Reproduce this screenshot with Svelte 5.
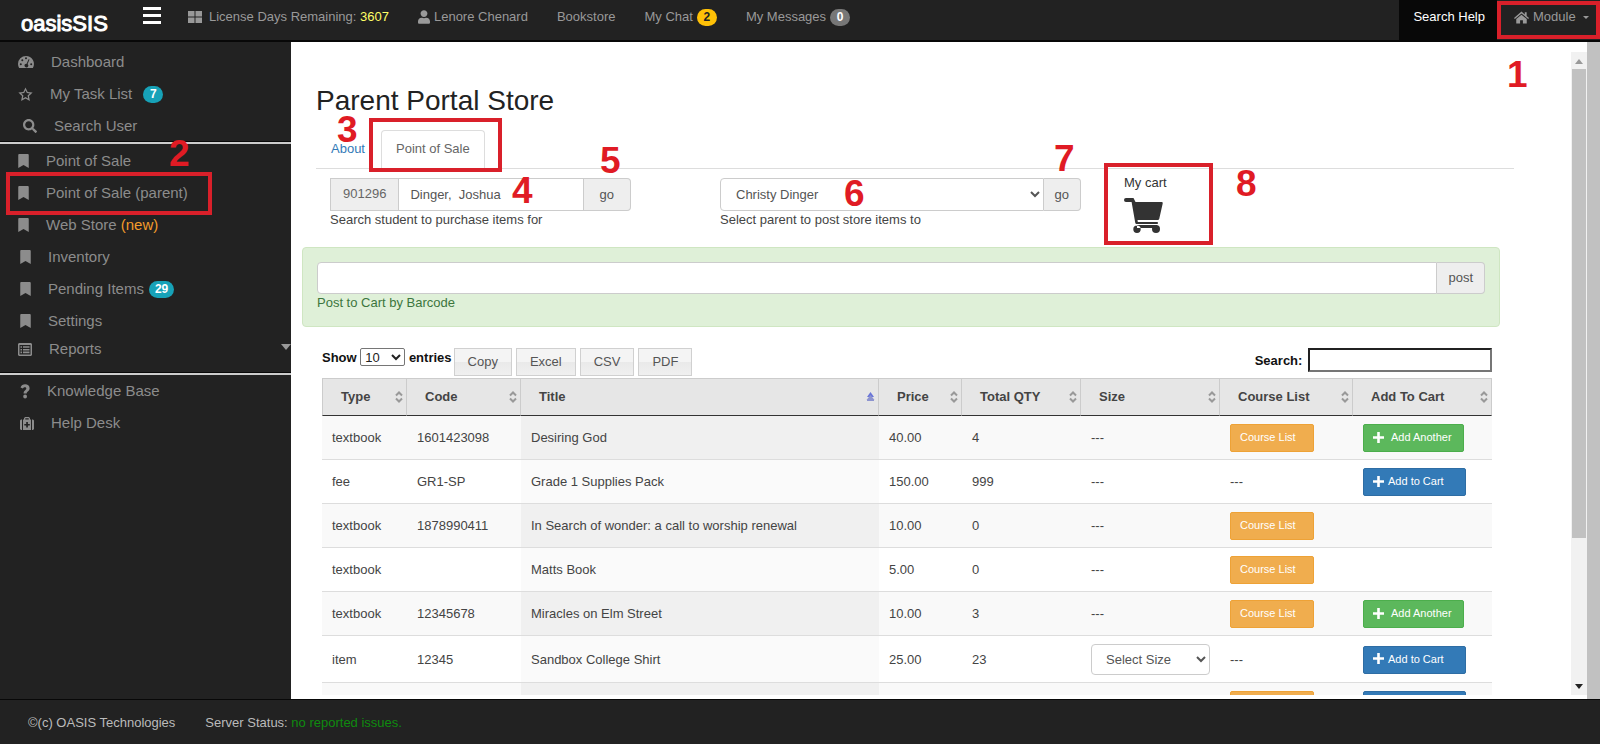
<script lang="ts">
	type Icon = { box: string; w: number; h: number; d: string };

	const icons: Record<string, Icon> = {
		bookmark: {
			box: '0 0 384 512',
			w: 11,
			h: 14,
			d: 'M0 512V40C0 18 18 0 40 0h304c22 0 40 18 40 40v472L192 400z'
		},
		gauge: {
			box: '0 0 16 14',
			w: 16,
			h: 14,
			d: 'M8 1a8 8 0 0 0-8 8c0 1.500.4 2.800 1.100 4h13.800A8 8 0 0 0 8 1zM8 2.200a1 1 0 1 1 0 2 1 1 0 0 1 0-2zM2.800 8.200a1 1 0 1 1 0 2 1 1 0 0 1 0-2zM4.300 4.300a1 1 0 1 1 0 2 1 1 0 0 1 0-2zM13.200 8.200a1 1 0 1 1 0 2 1 1 0 0 1 0-2zM10.600 4.200l.9.400-1.900 4.500a1.900 1.900 0 1 1-1-.4z'
		},
		star: {
			box: '0 0 16 16',
			w: 15,
			h: 15,
			d: 'M8 .4l2.300 4.800 5.300.7-3.900 3.700 1 5.300L8 12.300l-4.700 2.600 1-5.300L.4 5.900l5.300-.7zM8 3.500L6.600 6.400l-3.200.4 2.400 2.300-.6 3.200L8 10.700l2.800 1.600-.6-3.200 2.400-2.300-3.200-.4z'
		},
		search: {
			box: '0 0 512 512',
			w: 14,
			h: 14,
			d: 'M505 442.700L405.300 343c-4.500-4.500-10.600-7-17-7H372c27.600-35.300 44-79.700 44-128C416 93.100 322.900 0 208 0S0 93.100 0 208s93.100 208 208 208c48.300 0 92.700-16.400 128-44v16.300c0 6.400 2.500 12.500 7 17l99.700 99.700c9.400 9.400 24.600 9.400 33.900 0l28.300-28.300c9.400-9.400 9.400-24.600.1-34zM208 336c-70.700 0-128-57.200-128-128 0-70.700 57.200-128 128-128 70.700 0 128 57.200 128 128 0 70.700-57.200 128-128 128z'
		},
		list: {
			box: '0 0 14 13',
			w: 14,
			h: 13,
			d: 'M1 0h12l1 1v11l-1 1H1l-1-1V1zM1.500 2v9.500h11V2zM2.500 3.200H4v1.600H2.500zM5 3.200h6.500v1.600H5zM2.500 5.900H4v1.600H2.500zM5 5.900h6.500v1.600H5zM2.500 8.600H4v1.600H2.500zM5 8.600h6.500v1.600H5z'
		},
		question: {
			box: '0 0 10 15',
			w: 10,
			h: 15,
			d: 'M.5 3.500C1.400 1.300 2.900.3 5.100.3c2.600 0 4.500 1.600 4.500 3.900 0 2.900-2.900 3.300-2.900 5.200H3.600c0-3 2.700-3.300 2.700-4.900 0-.8-.6-1.300-1.400-1.300-.9 0-1.500.5-2 1.400zM5.100 10.600a1.900 1.900 0 1 1 0 3.800 1.900 1.900 0 0 1 0-3.800z'
		},
		medkit: {
			box: '0 0 14 13',
			w: 14,
			h: 13,
			d: 'M4 2.500V1.200L5 0h4l1 1.200v1.300h1V13H3V2.500zM5.300 2.500h3.400V1.300H5.300zM0 3.500l1-1h1V13H1l-1-1zM12 2.500h1l1 1V12l-1 1h-1zM6.200 5v1.900H4.300v1.700h1.900v1.900h1.700V8.600h1.900V6.900H7.900V5z'
		},
		tiles: { box: '0 0 14 12', w: 14, h: 12, d: 'M0 0h6.500v5.500H0zM7.500 0H14v5.500H7.500zM0 6.500h6.500V12H0zM7.500 6.500H14V12H7.500z' },
		user: {
			box: '0 0 448 512',
			w: 12,
			h: 14,
			d: 'M224 256c70.700 0 128-57.300 128-128S294.700 0 224 0 96 57.300 96 128s57.300 128 128 128zm89.600 32h-16.700c-22.200 10.200-46.900 16-72.900 16s-50.600-5.800-72.900-16h-16.700C60.200 288 0 348.200 0 422.400V464c0 26.500 21.500 48 48 48h352c26.500 0 48-21.500 48-48v-41.600c0-74.200-60.200-134.400-134.400-134.400z'
		},
		home: {
			box: '0 0 16 13',
			w: 15,
			h: 13,
			d: 'M8 .2l3.500 3V1h2v3.900L16 7l-.9 1L8 2.100.9 8 0 7zM8 3.500l5.600 4.600V13H9.500V9.500h-3V13H2.400V8.100z'
		},
		plus: { box: '0 0 11 11', w: 11, h: 11, d: 'M4.200 0h2.600v4.200H11v2.600H6.800V11H4.200V6.800H0V4.200h4.200z' },
		cart: {
			box: '0 0 39 35',
			w: 39,
			h: 35,
			d: 'M2 0h7.500l2 4H38q1 0 .7 1.500l-3.500 15.500q-.3 1-1.500 1H13.500l.3 2h20v2H12.500q-1 0-1.200-1L7.600 4H2Q0 4 0 2t2-2zM13 27h20v3H13zM13 27.500a3.500 3.500 0 1 0 0 7.400 3.500 3.500 0 0 0 0-7.400z'
		}
	};

	type Item = { icon: string; label: string; badge?: string; note?: string; step?: number; shift?: string };

	const menu: Item[][] = [
		[
			{ icon: 'gauge', label: 'Dashboard' },
			{ icon: 'star', label: 'My Task List', badge: '7' },
			{ icon: 'search', label: 'Search User', shift: 'far' }
		],
		[
			{ icon: 'bookmark', label: 'Point of Sale' },
			{ icon: 'bookmark', label: 'Point of Sale (parent)', step: 2 },
			{ icon: 'bookmark', label: 'Web Store', note: '(new)' },
			{ icon: 'bookmark', label: 'Inventory', shift: 'near' },
			{ icon: 'bookmark', label: 'Pending Items', badge: '29', shift: 'near' },
			{ icon: 'bookmark', label: 'Settings', shift: 'near' },
			{ icon: 'list', label: 'Reports', shift: 'reports' }
		],
		[
			{ icon: 'question', label: 'Knowledge Base', shift: 'near' },
			{ icon: 'medkit', label: 'Help Desk', shift: 'near' }
		]
	];

	const columns = ['Type', 'Code', 'Title', 'Price', 'Total QTY', 'Size', 'Course List', 'Add To Cart'];

	type Row = { type: string; code: string; title: string; price: string; qty: string; sized?: boolean; course: boolean; add: string };

	const rows: Row[] = [
		{ type: 'textbook', code: '1601423098', title: 'Desiring God', price: '40.00', qty: '4', course: true, add: 'another' },
		{ type: 'fee', code: 'GR1-SP', title: 'Grade 1 Supplies Pack', price: '150.00', qty: '999', course: false, add: 'cart' },
		{ type: 'textbook', code: '1878990411', title: 'In Search of wonder: a call to worship renewal', price: '10.00', qty: '0', course: true, add: '' },
		{ type: 'textbook', code: '', title: 'Matts Book', price: '5.00', qty: '0', course: true, add: '' },
		{ type: 'textbook', code: '12345678', title: 'Miracles on Elm Street', price: '10.00', qty: '3', course: true, add: 'another' },
		{ type: 'item', code: '12345', title: 'Sandbox College Shirt', price: '25.00', qty: '23', sized: true, course: false, add: 'cart' },
		{ type: '', code: '', title: '', price: '', qty: '', course: true, add: 'cart' }
	];

	let student = $state('Dinger,  Joshua');
	let barcode = $state('');
	let query = $state('');
</script>

{#snippet glyph(name: string)}
	{@const icon = icons[name]}
	<svg class="icon" viewBox={icon.box} width={icon.w} height={icon.h} aria-hidden="true">
		<path d={icon.d} fill="currentColor" fill-rule={name === 'cart' ? 'nonzero' : 'evenodd'} />
		{#if name === 'cart'}<circle cx="32" cy="31" r="4" fill="currentColor" />{/if}
	</svg>
{/snippet}

<div class="page">
	<header class="topbar">
		<a class="logo" href="#home">oasisSIS</a>
		<button class="burger" aria-label="Toggle menu"><i></i><i></i><i></i></button>
		<nav class="links">
			<a class="license" href="#license">{@render glyph('tiles')}<span>License Days Remaining: <b>3607</b></span></a>
			<a class="person" href="#profile">{@render glyph('user')}Lenore Chenard</a>
			<a href="#bookstore">Bookstore</a>
			<a href="#chat">My Chat <span class="badge amber">2</span></a>
			<a href="#messages">My Messages <span class="badge grey">0</span></a>
		</nav>
		<a class="help" href="#help">Search Help</a>
		<a class="module" href="#module">
			{@render glyph('home')}Module<i class="caret"></i>
			<span class="step s1">1</span>
		</a>
	</header>

	<div class="middle">
		<aside class="sidebar">
			{#each menu as group}
				<ul>
					{#each group as item}
						<li class={item.shift}>
							<a href="#{item.icon}" class:marked={item.step}>
								{@render glyph(item.icon)}
								<span>
									{item.label}
									{#if item.note}<b class="note">{item.note}</b>{/if}
								</span>
								{#if item.badge}<span class="badge teal">{item.badge}</span>{/if}
								{#if item.step}<span class="step s2">{item.step}</span>{/if}
							</a>
						</li>
					{/each}
				</ul>
			{/each}
		</aside>

		<main>
			<h1>Parent Portal Store</h1>

			<nav class="tabs">
				<a href="#about">About<span class="step s3">3</span></a>
				<a class="active" href="#pos">Point of Sale</a>
			</nav>

			<div class="pickers">
				<div class="picker">
					<div class="group">
						<span class="addon">901296</span>
						<input id="student" type="text" bind:value={student} />
						<button class="wide">go</button>
					</div>
					<label for="student">Search student to purchase items for</label>
					<span class="step s4">4</span>
					<span class="step s5">5</span>
				</div>
				<div class="picker parent">
					<div class="group">
						<select id="parent">
							<option>Christy Dinger</option>
						</select>
						<button>go</button>
					</div>
					<label for="parent">Select parent to post store items to</label>
					<span class="step s6">6</span>
					<span class="step s7">7</span>
				</div>
				<a class="cart" href="#cart">
					<span>My cart</span>
					{@render glyph('cart')}
					<span class="step s8">8</span>
				</a>
			</div>

			<section class="barcode">
				<div class="group">
					<input id="barcode" type="text" bind:value={barcode} />
					<button>post</button>
				</div>
				<label for="barcode">Post to Cart by Barcode</label>
			</section>

			<section class="listing">
				<div class="toolbar">
					<label class="length">
						Show
						<select>
							<option>10</option>
							<option>25</option>
						</select>
						entries
					</label>
					<div class="exports">
						<button>Copy</button>
						<button>Excel</button>
						<button>CSV</button>
						<button>PDF</button>
					</div>
					<label class="filter">Search: <input type="search" bind:value={query} /></label>
				</div>

				<table>
					<colgroup>
						{#each columns as column, i}
							<col class="c{i}" />
						{/each}
					</colgroup>
					<thead>
						<tr>
							{#each columns as column}
								<th>
									<div>
										{column}
										{#if column === 'Title'}
											<svg width="9" height="10" viewBox="0 0 9 10" aria-hidden="true">
												<path d="M4.500 0L8 5H1z" fill="#6a75d8" />
												<path d="M4.500 3L8.500 8H.5zM1 8h7v1H1z" fill="#8d94cf" />
											</svg>
										{:else}
											<svg width="8" height="12" viewBox="0 0 8 12" aria-hidden="true">
												<path d="M1 4.500L4 1.500l3 3M1 7.500l3 3 3-3" fill="none" stroke="#999" stroke-width="2" />
											</svg>
										{/if}
									</div>
								</th>
							{/each}
						</tr>
					</thead>
					<tbody>
						{#each rows as row}
							<tr>
								<td>{row.type}</td>
								<td>{row.code}</td>
								<td class="sorted">{row.title}</td>
								<td>{row.price}</td>
								<td>{row.qty}</td>
								<td>
									{#if row.sized}
										<select class="size" aria-label="Size">
											<option>Select Size</option>
										</select>
									{:else if row.type}
										---
									{/if}
								</td>
								<td>
									{#if row.course}<button class="btn course">Course List</button>{:else}---{/if}
								</td>
								<td>
									{#if row.add === 'another'}
										<button class="btn another">{@render glyph('plus')}Add Another</button>
									{:else if row.add === 'cart'}
										<button class="btn add">{@render glyph('plus')}Add to Cart</button>
									{/if}
								</td>
							</tr>
						{/each}
					</tbody>
				</table>
			</section>
		</main>

		<div class="scrollbar" aria-hidden="true">
			<i class="up"></i>
			<div class="track"><div class="thumb"></div></div>
			<i class="down"></i>
		</div>
		<div class="gutter"></div>
	</div>

	<footer>
		<span>©(c) OASIS Technologies</span>
		<span>Server Status: <em>no reported issues.</em></span>
	</footer>
</div>

<style>
	:global(body) {
		margin: 0;
	}

	.page {
		display: flex;
		flex-direction: column;
		height: 100vh;
		overflow: hidden;
		background: #222;
		color: #444;
		font: 13px/18px 'Liberation Sans', Arial, sans-serif;
	}

	.page :is(button, input, select) {
		box-sizing: border-box;
		margin: 0;
		font: inherit;
		color: #555;
	}

	a {
		color: inherit;
		text-decoration: none;
	}

	.icon {
		display: block;
		flex: none;
	}

	.badge {
		box-sizing: border-box;
		display: inline-block;
		min-width: 20px;
		padding: 0 6px;
		border-radius: 9px;
		color: #fff;
		font-size: 12px;
		font-weight: bold;
		line-height: 17px;
		text-align: center;
	}

	.amber {
		background: #ffc107;
		color: #222;
	}

	.grey {
		background: #777;
	}

	.teal {
		background: #17a2b8;
	}

	/* numbered walkthrough markers */
	.step {
		position: absolute;
		z-index: 2;
		color: #e01b24;
		font-size: 37px;
		font-weight: bold;
		line-height: 28px;
		pointer-events: none;
	}

	.module,
	.marked,
	.tabs .active,
	.cart {
		position: relative;
	}

	.module::after,
	.marked::after,
	.tabs .active::after,
	.cart::after {
		content: '';
		position: absolute;
		z-index: 1;
		border: 4px solid #d9202a;
		pointer-events: none;
	}

	/* top bar */
	.topbar {
		display: flex;
		flex: none;
		height: 40px;
		border-bottom: 2px solid #080808;
		color: #999;
		line-height: 34px;
	}

	.logo {
		width: 122px;
		padding-left: 21px;
		color: #fff;
		font-size: 22px;
		line-height: 48px;
		-webkit-text-stroke: 1px #fff;
	}

	.page .burger {
		display: flex;
		flex-direction: column;
		gap: 4px;
		width: 18px;
		height: 30px;
		margin-right: 27px;
		padding: 7px 0 0;
		border: 0;
		background: none;
	}

	.burger i {
		width: 18px;
		height: 3px;
		flex: none;
		background: #fff;
	}

	.links {
		display: flex;
		flex: 1;
		gap: 29px;
	}

	.links a,
	.module {
		display: flex;
		align-items: center;
		height: 34px;
		gap: 4px;
		white-space: nowrap;
	}

	.links .license {
		gap: 7px;
	}

	.license b {
		color: #ff6;
		font-weight: normal;
	}

	.help {
		padding: 0 12px 0 14px;
		background: #080808;
		color: #fff;
	}

	.module {
		width: 86px;
		padding-left: 17px;
	}

	.module::after {
		inset: 1px 0 -5px 0;
	}

	.caret {
		margin-left: 3px;
		border: 3px solid transparent;
		border-top-color: #999;
		border-bottom: 0;
	}

	.s1 {
		top: 61px;
		left: 10px;
	}

	/* sidebar */
	.middle {
		display: flex;
		flex: 1;
		min-height: 0;
	}

	.sidebar {
		flex: none;
		width: 291px;
		padding-top: 4px;
		box-sizing: border-box;
		color: #8c8c8c;
		font-size: 15px;
	}

	ul {
		margin: 0;
		padding: 0;
		list-style: none;
	}

	ul + ul {
		border-top: 2px solid #ccc;
		box-shadow: 0 -1px #080808;
	}

	li {
		padding-left: 18px;
	}

	ul:nth-child(2) {
		padding: 1px 0 12px;
	}

	.near {
		padding-left: 20px;
	}

	.far {
		padding-left: 23px;
	}

	li a {
		display: flex;
		align-items: center;
		gap: 17px;
		height: 32px;
	}

	.note {
		color: #f39c2b;
		font-weight: normal;
	}

	li .badge {
		margin-left: -6px;
	}

	.near .badge {
		margin-left: -12px;
	}

	.marked::after {
		inset: -5px auto -6px -12px;
		width: 198px;
	}

	.s2 {
		top: -37px;
		left: 151px;
	}

	.reports a {
		height: 24px;
	}

	.reports {
		display: flex;
		justify-content: space-between;
	}

	.reports::after {
		content: '';
		margin-top: 7px;
		height: 0;
		border: 5px solid transparent;
		border-top: 6px solid #999;
		border-bottom: 0;
	}

	/* content */
	main {
		flex: 1;
		min-width: 0;
		box-sizing: border-box;
		border-bottom: 4px solid #fff;
		overflow: hidden;
		background: #fff;
	}

	h1 {
		margin: 42px 0 0 25px;
		color: #222;
		font-size: 28px;
		font-weight: normal;
		line-height: 34px;
	}

	.tabs {
		display: flex;
		margin: 12px 57px 0 25px;
		border-bottom: 1px solid #ddd;
	}

	.tabs a {
		position: relative;
		margin: 0 0 -1px;
		padding: 9px 14px 10px;
		border: 1px solid transparent;
		border-radius: 4px 4px 0 0;
		color: #337ab7;
	}

	.tabs .active {
		margin-left: 1px;
		border-color: #ddd;
		border-bottom-color: #fff;
		color: #666;
	}

	.tabs .active::after {
		inset: -13px -18px -4px -13px;
	}

	.s3 {
		top: -15px;
		left: 20px;
	}

	.pickers {
		display: grid;
		grid-template-columns: minmax(0, 390fr) minmax(0, 404fr) minmax(0, 390fr);
		margin: 9px 57px 0 39px;
	}

	.picker {
		position: relative;
		margin-right: 89px;
	}

	.parent {
		margin-right: 43px;
	}

	.picker label,
	.barcode label {
		display: block;
		line-height: 18px;
	}

	.group {
		display: flex;
		height: 32px;
	}

	.picker .group {
		height: 33px;
	}

	.group > * {
		border: 1px solid #ccc !important;
		background: #fff;
	}

	.group > :not(:first-child) {
		border-left: 0 !important;
	}

	.group > :first-child {
		border-radius: 4px 0 0 4px;
	}

	.group .addon {
		padding: 6px 12px;
		border-radius: 0;
		background: #eee;
		color: #666;
	}

	.group :is(input, select) {
		flex: 1;
		min-width: 0;
		padding: 0 11px;
	}

	.group button {
		padding: 0 11px;
		border-radius: 0 4px 4px 0;
		background: #eee;
	}

	.group .wide {
		padding: 0 16px;
	}

	.s4 {
		top: -1px;
		left: 182px;
	}

	.s5 {
		top: -31px;
		left: 270px;
	}

	.s6 {
		top: 2px;
		left: 124px;
	}

	.s7 {
		top: -33px;
		left: 334px;
	}

	.cart {
		display: flex;
		flex-direction: column;
		gap: 6px;
		justify-self: start;
		height: 55px;
		margin-top: -4px;
		color: #333;
	}

	.cart::after {
		inset: -11px auto -16px -20px;
		width: 101px;
	}

	.s8 {
		top: -4px;
		left: 112px;
	}

	.barcode {
		margin: 18px 71px 0 11px;
		padding: 14px;
		border: 1px solid #cfe6c2;
		border-radius: 4px;
		background: #dff0d8;
		color: #3c763d;
	}

	.listing {
		margin: 21px 79px 0 31px;
	}

	.toolbar {
		display: flex;
		height: 30px;
		color: #111;
		font-weight: bold;
	}

	.length select {
		width: 45px;
		height: 18px;
		border: 1px solid #767676;
		border-radius: 2px;
		background: #fff;
		color: #222;
		font-weight: normal;
	}

	.exports {
		display: flex;
		gap: 4px;
		margin-left: 2px;
		flex: 1;
	}

	.exports button {
		height: 28px;
		padding: 0 13px;
		border: 1px solid #d0d0d0;
		background: linear-gradient(#f4f4f4 50%, #e9e9e9 50%, #f0f0f0);
		font-weight: normal;
	}

	.filter input {
		width: 184px;
		height: 24px;
		margin-left: 2px;
		border: 2px inset #767676;
		background: #fff;
	}

	table {
		width: 100%;
		border-collapse: separate;
		border-spacing: 0;
		table-layout: fixed;
	}

	.c0 {
		width: 85px;
	}

	.c1 {
		width: 114px;
	}

	.c3 {
		width: 83px;
	}

	.c4 {
		width: 119px;
	}

	.c5 {
		width: 139px;
	}

	.c6 {
		width: 133px;
	}

	.c7 {
		width: 139px;
	}

	th {
		padding: 9px 3px 9px 18px;
		border-top: 1px solid #ccc;
		border-right: 1px solid #ccc;
		border-bottom: 1px solid #333;
		background: #e6e6e6;
		text-align: left;
	}

	th:first-child {
		border-left: 1px solid #ccc;
	}

	th div {
		display: flex;
		justify-content: space-between;
		align-items: center;
	}

	td {
		height: 28px;
		padding: 8px 10px 7px;
		border-bottom: 1px solid #ddd;
	}

	tbody tr:nth-child(odd) td {
		background: #f9f9f9;
	}

	tbody tr:nth-child(even) .sorted {
		background: #fafafa;
	}

	tbody tr:nth-child(odd) .sorted {
		background: #f0f0f0;
	}

	.page .size {
		display: block;
		width: 119px;
		height: 31px;
		padding: 0 10px;
		border: 1px solid #ccc;
		border-radius: 4px;
		background: #fff;
	}

	.page .btn {
		display: flex;
		align-items: center;
		height: 28px;
		padding: 0 9px 2px;
		border: 1px solid;
		border-radius: 2px;
		color: #fff;
		font-size: 11px;
		white-space: nowrap;
	}

	.page .course {
		width: 84px;
		background: #f0ad4e;
		border-color: #eea236;
	}

	.page .another {
		gap: 7px;
		width: 101px;
		background: #5cb85c;
		border-color: #4cae4c;
	}

	.page .add {
		gap: 4px;
		width: 103px;
		background: #337ab7;
		border-color: #2e6da4;
	}

	/* scroll bar of the content frame */
	.scrollbar {
		display: flex;
		flex-direction: column;
		align-items: center;
		width: 16px;
		padding-top: 10px;
		background: linear-gradient(#fff 10px, #f1f1f1 10px);
		border-bottom: 4px solid #fff;
	}

	.track {
		flex: 1;
		width: 14px;
		margin: 5px 0 6px;
	}

	.thumb {
		height: 77%;
		background: #c1c1c1;
	}

	.up,
	.down {
		margin: 7px 0 0;
		border: 4px solid transparent;
	}

	.up {
		border-top: 0;
		border-bottom: 5px solid #999;
	}

	.down {
		margin: 0 0 6px;
		border-bottom: 0;
		border-top: 5px solid #222;
	}

	.gutter {
		width: 13px;
		background: #c1c1c1;
	}

	footer {
		display: flex;
		flex: none;
		gap: 30px;
		height: 44px;
		padding-left: 28px;
		border-top: 1px solid #080808;
		color: #bbb;
		line-height: 46px;
	}

	em {
		color: #0f8a0f;
		font-style: normal;
	}
</style>
